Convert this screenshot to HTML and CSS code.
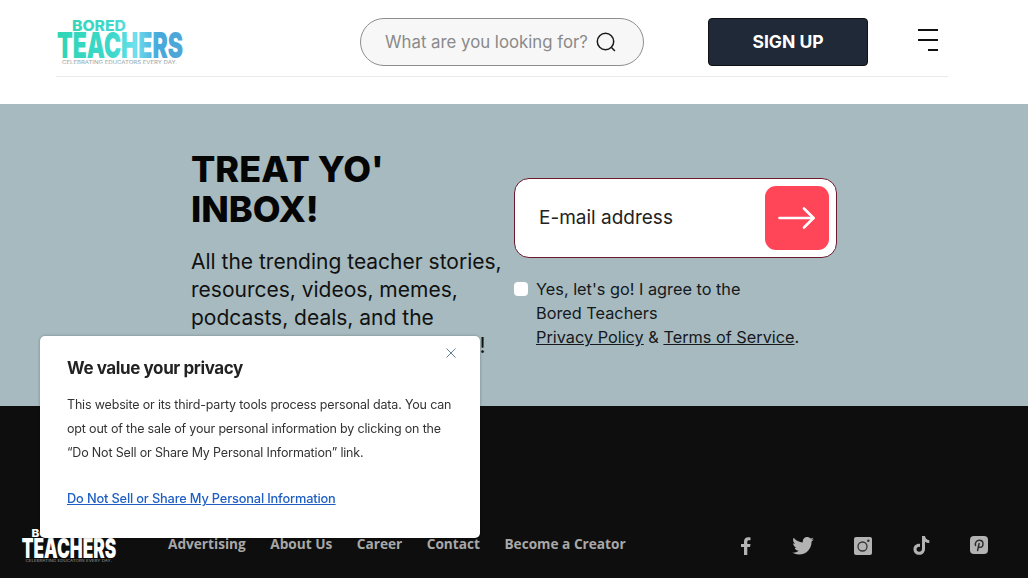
FILE: index.html
```html
<!DOCTYPE html>
<html lang="en">
<head>
<meta charset="UTF-8">
<meta name="viewport" content="width=device-width, initial-scale=1.0">
<title>Bored Teachers</title>
<link rel="stylesheet" href="styles.css">
</head>
<body>
<header class="site-header">
  <div class="header-inner">
    <svg class="logo logo-color" width="126" height="44" viewBox="0 0 126 44">
      <defs>
        <linearGradient id="logoGrad" gradientUnits="userSpaceOnUse" x1="0" y1="0" x2="126" y2="0">
          <stop offset="0" stop-color="#2ed6b4"/>
          <stop offset="0.45" stop-color="#3fd8cc"/>
          <stop offset="0.62" stop-color="#6fe0ee"/>
          <stop offset="0.8" stop-color="#48a9dc"/>
          <stop offset="1" stop-color="#4ea6d6"/>
        </linearGradient>
      </defs>
      <text class="logo-bored" x="15" y="10.500" textLength="54" lengthAdjust="spacingAndGlyphs">BORED</text>
      <text class="logo-main" x="0" y="38" textLength="126" lengthAdjust="spacingAndGlyphs">TEACHERS</text>
      <text class="logo-tag" x="5" y="43.500" textLength="115" lengthAdjust="spacingAndGlyphs">CELEBRATING EDUCATORS EVERY DAY.</text>
    </svg>
    <div class="search-box">
      <span class="search-text">What are you looking for?</span>
      <svg class="search-icon" width="22" height="22" viewBox="0 0 22 22" fill="none" stroke="#1a1a1a" stroke-width="1.5">
        <circle cx="10.500" cy="10.500" r="8.200"/>
        <path d="M16.500 16.500l3.400 3.600"/>
      </svg>
    </div>
    <a class="signup-btn" href="#">SIGN UP</a>
    <div class="menu-icon">
      <span class="menu-line"></span>
      <span class="menu-line"></span>
      <span class="menu-line menu-line-short"></span>
    </div>
  </div>
</header>

<section class="newsletter">
  <div class="news-left">
    <h2>TREAT YO' INBOX!</h2>
    <p>All the trending teacher stories,<br>resources, videos, memes,<br>podcasts, deals, and the<br>boldest from Bored Teachers!</p>
  </div>
  <form class="news-form">
    <div class="email-box">
      <span class="email-label">E-mail address</span>
      <span class="email-btn">
        <svg width="38" height="24" viewBox="0 0 38 24" fill="none" stroke="#fff" stroke-width="2.600" stroke-linecap="round" stroke-linejoin="round">
          <path d="M1.500 12h34"/>
          <path d="M26 2.500l9.500 9.500-9.500 9.500"/>
        </svg>
      </span>
    </div>
    <div class="agree">
      <span class="agree-check"></span>
      <p>Yes, let's go! I agree to the<br>Bored Teachers<br><a href="#">Privacy Policy</a> &amp; <a href="#">Terms of Service</a>.</p>
    </div>
  </form>
</section>

<footer class="site-footer">
  <svg class="logo logo-white" width="96" height="33" viewBox="0 0 126 44">
    <text class="logo-bored" x="13" y="10.500" textLength="54" lengthAdjust="spacingAndGlyphs">BORED</text>
    <text class="logo-main" x="0" y="38" textLength="126" lengthAdjust="spacingAndGlyphs">TEACHERS</text>
    <text class="logo-tag" x="5" y="43.500" textLength="115" lengthAdjust="spacingAndGlyphs">CELEBRATING EDUCATORS EVERY DAY.</text>
  </svg>
  <nav class="footer-nav">
    <a href="#">Advertising</a>
    <a href="#">About Us</a>
    <a href="#">Career</a>
    <a href="#">Contact</a>
    <a href="#">Become a Creator</a>
  </nav>
  <div class="socials">
    <svg width="10" height="18" viewBox="0 0 10 18" fill="#b3b3b3"><path d="M3 18V10H0V7h3V4.600C3 1.700 4.700.2 7.200.2c1 0 1.900.1 2.300.2v2.800H8c-1.300 0-1.700.7-1.700 1.600V7h3.200l-.5 3H6.300v8z"/></svg>
    <svg width="22" height="18" viewBox="0 0 24 20" fill="#b3b3b3"><path d="M24 2.400c-.9.400-1.800.7-2.800.8 1-.6 1.800-1.600 2.200-2.700-1 .6-2 1-3.100 1.200C19.300.7 18 .1 16.600.1c-2.700 0-4.900 2.200-4.900 4.900 0 .4 0 .8.100 1.100C7.700 5.900 4.100 4 1.700.9 1.200 1.700 1 2.500 1 3.400c0 1.700.9 3.200 2.200 4.100-.8 0-1.600-.2-2.200-.6v.1c0 2.400 1.700 4.400 3.900 4.800-.4.100-.8.200-1.300.2-.3 0-.6 0-.9-.1.600 2 2.400 3.400 4.600 3.400-1.700 1.300-3.800 2.100-6.100 2.100-.4 0-.8 0-1.200-.1 2.200 1.400 4.800 2.200 7.500 2.200 9.100 0 14-7.500 14-14v-.6c1-.7 1.800-1.600 2.500-2.500z"/></svg>
    <svg width="18" height="18" viewBox="0 0 18 18"><rect width="18" height="18" rx="2" fill="#b3b3b3"/><circle cx="8.500" cy="9.500" r="4.500" fill="none" stroke="#333" stroke-width="1.300"/><circle cx="14.300" cy="3.700" r="1.300" fill="#333"/></svg>
    <svg width="17" height="19" viewBox="0 0 17 19" fill="#b3b3b3"><path d="M9 0h3c.2 2.300 1.700 3.800 4.300 4.200v2.900c-1.700 0-3.100-.5-4.300-1.400v7.200c0 3.400-2.500 5.900-5.800 5.900S.5 16.300.5 13.200c0-3.300 2.900-5.800 6.500-5.300v3c-1.900-.4-3.500.7-3.500 2.300 0 1.400 1.100 2.500 2.700 2.500 1.700 0 2.800-1.100 2.800-3z"/></svg>
    <svg class="soc-pin" width="18" height="18" viewBox="0 0 18 18"><rect width="18" height="18" rx="4" fill="#b3b3b3"/><path d="M7.600 14.500l1.500-7M5.600 9.500C4.700 6.700 6.600 4.300 9.300 4.300c2.300 0 3.700 1.500 3.700 3.400 0 2.200-1.300 3.700-3 3.700-.8 0-1.400-.4-1.700-1" fill="none" stroke="#2a2a2a" stroke-width="1.400" stroke-linecap="round"/></svg>
  </div>
</footer>

<aside class="privacy-popup">
  <svg class="popup-close" width="10" height="10" viewBox="0 0 10 10" fill="none" stroke="#5d7f98" stroke-width="1"><path d="M.5.500l9 9M9.500.500l-9 9"/></svg>
  <h3>We value your privacy</h3>
  <p>This website or its third-party tools process personal data. You can opt out of the sale of your personal information by clicking on the “Do Not Sell or Share My Personal Information” link.</p>
  <a href="#">Do Not Sell or Share My Personal Information</a>
</aside>
</body>
</html>
```

FILE: styles.css
```css
html, body {
  margin: 0;
  padding: 0;
  height: 578px;
  overflow: hidden;
  background-color: #fff;
  font-family: 'Inter', 'Open Sans', sans-serif;
  color: #111;
}

a {
  color: inherit;
}

/* header */
.site-header {
  height: 104px;
  background-color: #fff;
}

.header-inner {
  width: 892px;
  height: 77px;
  margin-left: 56px;
  box-sizing: border-box;
  padding-bottom: 10px;
  border-bottom: 1px solid #e9e9e9;
  display: flex;
  align-items: flex-end;
}

/* logo */
.logo {
  flex: none;
  display: block;
  overflow: visible;
  font-family: 'Inter', sans-serif;
}

.logo-bored {
  font-size: 14.500px;
  font-weight: 800;
}

.logo-main {
  font-size: 36px;
  font-weight: 900;
}

.logo-tag {
  font-size: 4.500px;
  font-weight: 400;
}

.logo-color {
  margin: 20px 177px 0 1px;
  align-self: flex-start;
}

.logo-color .logo-bored,
.logo-color .logo-main {
  fill: url(#logoGrad);
}

.logo-color .logo-tag {
  fill: #93a6a8;
}

.logo-white .logo-bored,
.logo-white .logo-main {
  fill: #fff;
}

.logo-white .logo-tag {
  fill: #999;
}

.search-box {
  width: 284px;
  height: 48px;
  box-sizing: border-box;
  padding: 0 26px 0 24px;
  border: 1px solid #8e8e8e;
  border-radius: 24px;
  background-color: #f7f7f7;
  display: flex;
  align-items: center;
  justify-content: space-between;
}

.search-text {
  font-size: 16.800px;
  color: #8a8a8a;
  white-space: nowrap;
}

.search-icon {
  flex: none;
}

.signup-btn {
  width: 160px;
  height: 48px;
  margin-left: 64px;
  box-sizing: border-box;
  border: 1px solid #111;
  border-radius: 4px;
  background-color: #1f2937;
  color: #fff;
  font-size: 17.500px;
  font-weight: 700;
  text-decoration: none;
  display: flex;
  align-items: center;
  justify-content: center;
  padding-bottom: 2px;
}

.menu-icon {
  width: 20px;
  margin-left: 50px;
  align-self: flex-start;
  margin-top: 29px;
  display: flex;
  flex-direction: column;
  align-items: flex-end;
  gap: 8px;
}

.menu-line {
  display: block;
  width: 20px;
  height: 2px;
  background-color: #111;
}

.menu-line-short {
  width: 10px;
}

/* newsletter */
.newsletter {
  height: 302px;
  box-sizing: border-box;
  background-color: #a6babf;
  padding: 45px 0 0 191px;
  display: flex;
}

.news-left {
  width: 323px;
}

.news-left h2 {
  margin: 0 0 19px;
  width: 240px;
  font-size: 36px;
  line-height: 40px;
  font-weight: 800;
  color: #050505;
}

.news-left p {
  margin: 0;
  font-size: 21px;
  line-height: 28px;
  color: #111;
  white-space: nowrap;
}

.news-form {
  width: 323px;
  padding-top: 29px;
}

.email-box {
  height: 80px;
  box-sizing: border-box;
  padding: 0 7px 0 24px;
  border: 1px solid #6d1a2c;
  border-radius: 15px;
  background-color: #fff;
  display: flex;
  align-items: center;
  justify-content: space-between;
}

.email-label {
  font-size: 19px;
  color: #222;
  padding-bottom: 2px;
}

.email-btn {
  width: 64px;
  height: 64px;
  border-radius: 11px;
  background-color: #ff4558;
  display: flex;
  align-items: center;
  justify-content: center;
}

.agree {
  margin-top: 19px;
  display: flex;
  gap: 8px;
  align-items: flex-start;
}

.agree-check {
  flex: none;
  width: 14px;
  height: 14px;
  margin-top: 5px;
  border-radius: 4px;
  background-color: #fff;
}

.agree p {
  margin: 0;
  font-size: 16.300px;
  line-height: 24px;
  color: #15181c;
}

/* footer */
.site-footer {
  height: 172px;
  box-sizing: border-box;
  background-color: #0e0e0e;
  padding: 123px 40px 0 21px;
  display: flex;
  align-items: flex-start;
}

.logo-white {
  margin-right: 51px;
}

.footer-nav {
  display: flex;
  gap: 24.500px;
  padding-top: 5px;
  font-family: 'Open Sans', sans-serif;
  font-size: 13.650px;
  font-weight: 700;
  line-height: 20px;
}

.footer-nav a {
  color: #a8a8a8;
  text-decoration: none;
}

.socials {
  display: flex;
  align-items: center;
  gap: 40.500px;
  margin-left: auto;
  padding-top: 7px;
}

.soc-pin {
  margin-top: -2px;
}

/* privacy popup lies over the page */
.privacy-popup {
  position: fixed;
  left: 40px;
  top: 336px;
  width: 440px;
  height: 202px;
  box-sizing: border-box;
  padding: 20px 27px;
  background-color: #fff;
  border-radius: 5px;
  box-shadow: 0 0 3px rgba(0, 0, 0, 0.3);
}

.popup-close {
  position: absolute;
  top: 12px;
  right: 24px;
}

.privacy-popup h3 {
  margin: 0 0 13px;
  font-size: 17px;
  line-height: 24px;
  font-weight: 700;
  letter-spacing: -0.400px;
  color: #222;
}

.privacy-popup p {
  margin: 0 0 22px;
  font-size: 12.500px;
  line-height: 24px;
  letter-spacing: -0.170px;
  color: #333;
}

.privacy-popup a {
  font-size: 12.800px;
  font-weight: 500;
  line-height: 24px;
  letter-spacing: -0.160px;
  color: #1f5fc4;
}
```
